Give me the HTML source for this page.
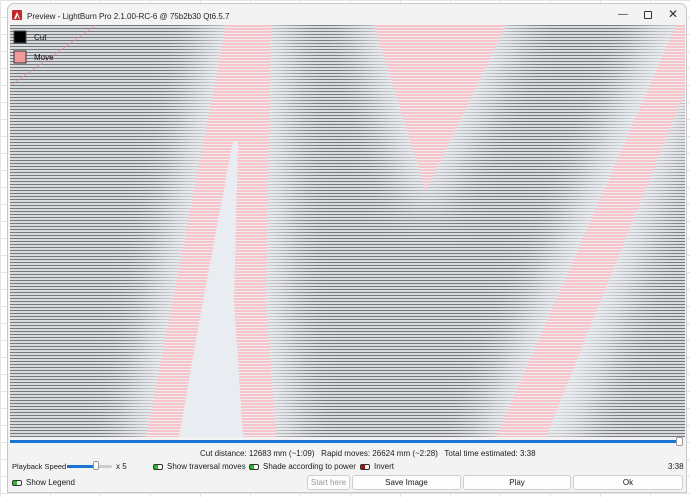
<!DOCTYPE html>
<html><head><meta charset="utf-8"><style>
*{margin:0;padding:0;box-sizing:border-box}
body{width:690px;height:497px;overflow:hidden;background:#fff;font-family:"Liberation Sans",sans-serif;font-size:8px;color:#1a1a1a;position:relative;
background-image:linear-gradient(#e4e4e4 1px,transparent 1px),linear-gradient(90deg,#e4e4e4 1px,transparent 1px);background-size:50px 17px;}
.win{position:absolute;left:7px;top:3px;width:680px;height:490px;background:#f3f3f3;border:1px solid #c8c8c8;border-radius:7px 7px 0 0;overflow:hidden}
.title{position:absolute;left:19px;top:8px;font-size:8px;color:#222}
.cv{position:absolute;left:2px;top:21px}
.abs{position:absolute;white-space:nowrap}
.tog{display:inline-block;width:10px;height:6px;border-radius:2px;background:#2fb52f;border:1px solid #333;vertical-align:middle;position:relative;margin-right:4px}
.tog:after{content:"";position:absolute;right:0;top:0;width:4px;height:4px;background:#fff;border-radius:1px}
.btn{position:absolute;top:471px;height:15px;border:1px solid #cfcfcf;background:#fdfdfd;border-radius:3px;text-align:center;line-height:13px;font-size:8px}
</style></head><body>
<div class="win">
 <svg class="abs" style="left:4px;top:6px" width="10" height="10" viewBox="0 0 10 10"><rect width="10" height="10" rx="1" fill="#c0282c"/><path d="M2 9 L5 2 L8 9 Z" fill="#fff"/><path d="M4 9 L5.5 5 L7 9Z" fill="#c0282c"/></svg>
 <div class="title">Preview - LightBurn Pro 2.1.00-RC-6 @ 75b2b30 Qt6.5.7</div>
 <div class="abs" style="left:610px;top:5px;font-size:10px;color:#333">—</div>
 <div class="abs" style="left:636px;top:7px;width:8px;height:8px;border:1px solid #333;border-radius:1px"></div>
 <div class="abs" style="left:660px;top:3px;font-size:12px;color:#333">✕</div>
 <svg class="cv" width="675" height="412" viewBox="0 0 675 412" shape-rendering="crispEdges">
  <defs>
   <pattern id="st" width="4" height="3" patternUnits="userSpaceOnUse"><rect width="4" height="3" fill="#d3d6da"/><rect width="4" height="1" fill="#63666b"/></pattern>
   <pattern id="pk" width="4" height="3" patternUnits="userSpaceOnUse"><rect width="4" height="3" fill="#eceef2"/><rect width="4" height="2" fill="#f8c3c9"/></pattern>
   <filter id="bl" x="-50%" y="-50%" width="200%" height="200%"><feGaussianBlur stdDeviation="20"/></filter>
  </defs>
  <rect width="675" height="412" fill="url(#st)"/>
  <rect width="675" height="412" fill="#fff" opacity="0.12"/>
  <g transform="translate(-9,-24)" filter="url(#bl)" fill="#eef0f4" stroke="#eef0f4" stroke-width="40" stroke-linejoin="round" opacity="0.85" shape-rendering="auto">
   <polygon points="225,24 270,24 265,300 275,436 145,436"/>
   <polygon points="373,24 505,24 425,190"/>
   <polygon points="670,24 700,24 560,436 495,436"/>
  </g>
  <g transform="translate(-9,-24)">
   <polygon points="225,24 270,24 265,300 275,436 242,436 233,300 237,140 232,140 202,300 178,436 145,436" fill="url(#pk)"/>
   <polygon points="232,140 237,140 233,300 242,436 178,436 202,300" fill="#e9ecf1"/>
   <polygon points="373,24 505,24 425,190" fill="url(#pk)"/>
   <polygon points="675,24 700,24 700,50 545,436 495,436" fill="url(#pk)"/>
   <line x1="9" y1="85" x2="95" y2="24" stroke="#e08a90" stroke-width="0.6" shape-rendering="auto"/>
  </g>
  <rect x="4" y="6" width="12" height="12" fill="#000" stroke="#444"/>
  <text x="24" y="15" font-size="8" font-family="Liberation Sans" fill="#111">Cut</text>
  <rect x="4" y="26" width="12" height="12" fill="#f29a9a" stroke="#333"/>
  <text x="24" y="35" font-size="8" font-family="Liberation Sans" fill="#111">Move</text>
 </svg>
 <div class="abs" style="left:2px;top:436px;width:670px;height:3px;background:#1a73d1"></div>
 <div class="abs" style="left:668px;top:433px;width:7px;height:9px;background:#fff;border:1px solid #999;border-radius:2px"></div>
 <div class="abs" style="left:192px;top:445px">Cut distance: 12683 mm (~1:09)&nbsp;&nbsp; Rapid moves: 26624 mm (~2:28)&nbsp;&nbsp; Total time estimated: 3:38</div>
 <div class="abs" style="left:4px;top:458px;font-size:7.5px">Playback Speed</div>
 <div class="abs" style="left:59px;top:461px;width:45px;height:3px;background:#ccc;border-radius:2px"><div style="width:27px;height:3px;background:#1a73d1"></div></div>
 <div class="abs" style="left:85px;top:457px;width:6px;height:9px;background:#fff;border:1px solid #999;border-radius:2px"></div>
 <div class="abs" style="left:108px;top:458px">x 5</div>
 <div class="abs" style="left:145px;top:458px"><span class="tog"></span>Show traversal moves</div>
 <div class="abs" style="left:241px;top:458px"><span class="tog"></span>Shade according to power</div>
 <div class="abs" style="left:352px;top:458px"><span class="tog" style="background:#a01010"></span>Invert</div>
 <div class="abs" style="left:660px;top:458px">3:38</div>
 <div class="abs" style="left:4px;top:474px"><span class="tog"></span>Show Legend</div>
 <div class="btn" style="left:299px;width:43px;color:#999">Start here</div>
 <div class="btn" style="left:344px;width:109px">Save Image</div>
 <div class="btn" style="left:455px;width:108px">Play</div>
 <div class="btn" style="left:565px;width:110px">Ok</div>
</div>
</body></html>
